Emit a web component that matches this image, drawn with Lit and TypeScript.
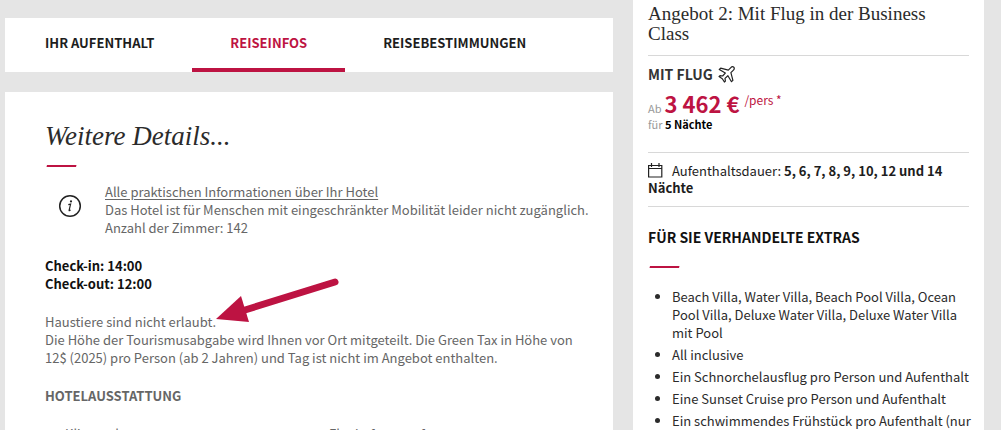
import { LitElement, html, css, svg } from "lit";
import { customElement } from "lit/decorators.js";

const extras = [
  "Beach Villa, Water Villa, Beach Pool Villa, Ocean Pool Villa, Deluxe Water Villa, Deluxe Water Villa mit Pool",
  "All inclusive",
  "Ein Schnorchelausflug pro Person und Aufenthalt",
  "Eine Sunset Cruise pro Person und Aufenthalt",
  "Ein schwimmendes Frühstück pro Aufenthalt (nur",
];

const dash = svg`<svg class="dash" width="32" height="4" viewBox="0 0 32 4" aria-hidden="true"><path d="M2 1h29.500l-.5 2H1.500z" fill="#bd1342"/></svg>`;

@customElement("app-root")
export class AppRoot extends LitElement {
  static styles = css`
    :host {
      display: block;
      height: 100vh;
      overflow: hidden;
      background: #e5e5e5;
      color: #666;
      font: 13px/18px "Noto Sans CJK JP", "Noto Sans", sans-serif;
    }
    * { box-sizing: border-box; }
    h1, h2, h3, p, ul { margin: 0; padding: 0; }
    b, strong { font-weight: 700; }
    .page {
      display: grid;
      grid-template-columns: 608fr 351fr;
      gap: 20px;
      padding: 0 17px 0 5px;
      min-height: 100%;
    }
    .main { display: flex; flex-direction: column; gap: 20px; padding-top: 18px; }
    .tabs { display: flex; padding-left: 2px; background: #fff; }
    .tab {
      padding: 16px 38px;
      border-bottom: 4px solid transparent;
      color: #1d1d1d;
      font-weight: 700;
      text-decoration: none;
    }
    .tab.active { color: #bd1342; border-color: #bd1342; }
    .card { position: relative; flex: 1; background: #fff; padding: 28px 20px 28px 40px; }
    .title { font: italic 27px/32px "Liberation Serif", serif; color: #2b2b2b; }
    .dash { display: block; }
    .card .dash { margin: 12px 0 15px; }
    .info { display: flex; gap: 23px; padding-left: 13px; }
    .info svg { margin-top: 11px; flex: none; }
    .info a { color: inherit; text-underline-offset: 2px; }
    .times { margin: 20px 0; color: #111; font-weight: 700; }
    .equip { margin: 20px 0; font-size: 13px; font-weight: 700; }
    .features { display: grid; grid-template-columns: 1fr 1fr; list-style: none; padding-left: 20px; }
    .arrow { position: absolute; left: 210px; top: 184px; }
    .offer { background: #fff; padding: 4px 15px; color: #2b2b2b; }
    .offer h2 { font: 19px/20px "Liberation Serif", serif; padding-bottom: 11px; border-bottom: 1px solid #d8d8d8; }
    .flight { display: flex; align-items: center; gap: 5px; margin-top: 8px; font-size: 14px; line-height: 20px; font-weight: 700; color: #333; }
    .price { display: flex; align-items: baseline; gap: 3px; line-height: 20px; margin-top: 9px; font-size: 11px; color: #999; }
    .price strong { font-size: 22px; color: #bd1342; }
    .per { margin-left: 2px; font-size: 12px; color: #bd1342; align-self: flex-start; line-height: 14px; }
    .nights { font-size: 11px; line-height: 12px; color: #999; }
    .nights b { color: #000; }
    .stay { margin-top: 22px; padding: 9px 0 10px; border: solid #d8d8d8; border-width: 1px 0; line-height: 17px; color: #1d1d1d; }
    .stay svg { margin-right: 9px; vertical-align: -2px; }
    .offer h3 { margin: 20px 0 18px; font-size: 14px; line-height: 20px; font-weight: 700; color: #111; }
    .extras { margin: 19px -6px 0 0; padding-left: 24px; }
    .extras li { margin-bottom: 4px; }
  `;

  render() {
    return html`
      <div class="page">
        <main class="main">
          <nav class="tabs">
            <a class="tab" href="#aufenthalt">IHR AUFENTHALT</a>
            <a class="tab active" href="#infos" aria-current="page">REISEINFOS</a>
            <a class="tab" href="#bestimmungen">REISEBESTIMMUNGEN</a>
          </nav>
          <section class="card">
            <h1 class="title">Weitere Details...</h1>
            ${dash}
            <div class="info">
              <svg width="24" height="24" viewBox="0 0 24 24" aria-hidden="true">
                <circle cx="12" cy="12" r="10.300" fill="none" stroke="#222" stroke-width="1.500"/>
                <circle cx="13" cy="7.400" r="1.100" fill="#222"/>
                <path d="M10.300 10.700l2.300-.6-1.500 6.300c-.1.600.6.300 1.500-.5" fill="none" stroke="#222" stroke-width="1.200"/>
              </svg>
              <div>
                <a href="#hotel">Alle praktischen Informationen über Ihr Hotel</a>
                <p>Das Hotel ist für Menschen mit eingeschränkter Mobilität leider nicht zugänglich.</p>
                <p>Anzahl der Zimmer: 142</p>
              </div>
            </div>
            <div class="times"><p>Check-in: 14:00</p><p>Check-out: 12:00</p></div>
            <p>Haustiere sind nicht erlaubt.</p>
            <p>Die Höhe der Tourismusabgabe wird Ihnen vor Ort mitgeteilt. Die Green Tax in Höhe von 12$ (2025) pro Person (ab 2 Jahren) und Tag ist nicht im Angebot enthalten.</p>
            <h2 class="equip">HOTELAUSSTATTUNG</h2>
            <ul class="features"><li>Klimaanlage</li><li>Flughafentransfer</li></ul>
            <svg class="arrow" width="126" height="50" viewBox="0 0 126 50" aria-hidden="true">
              <path d="M30 34L120 6" stroke="#bd1342" stroke-width="7" stroke-linecap="round"/>
              <path d="M1 43L26 20L34 46z" fill="#bd1342"/>
            </svg>
          </section>
        </main>
        <aside class="offer">
          <h2>Angebot 2: Mit Flug in der Business Class</h2>
          <p class="flight">MIT FLUG
            <svg width="17" height="17" viewBox="0 0 17 17" fill="none" stroke="#222" stroke-width="1.200" stroke-linejoin="round" aria-hidden="true">
              <path d="M15.800 1.200c-1-.8-2.400-.2-3.200.6L10.300 4.100 2.700 2.100 1.300 3.500 7.300 7.100 4.600 10 2 9.600 1 10.600 4.300 12.700 6.400 16 7.400 15 7 12.400 9.900 9.700 13.500 15.700 14.900 14.300 12.900 6.700 15.200 4.400c.8-.8 1.400-2.200.6-3.200z"/>
            </svg>
          </p>
          <p class="price"><span>Ab</span><strong>3 462 €</strong><span class="per">/pers *</span></p>
          <p class="nights">für <b>5 Nächte</b></p>
          <p class="stay"><svg width="15" height="15" viewBox="0 0 15 15" fill="none" stroke="#222" stroke-width="1.200" aria-hidden="true"><path d="M.6 2.500h13.200v11.500H.6zM.6 5.500h13.200M3.500 0v4M11 0v4"/></svg>Aufenthaltsdauer: <b>5, 6, 7, 8, 9, 10, 12 und 14 Nächte</b></p>
          <h3>FÜR SIE VERHANDELTE EXTRAS</h3>
          ${dash}
          <ul class="extras">${extras.map((e) => html`<li>${e}</li>`)}</ul>
        </aside>
      </div>
    `;
  }
}
